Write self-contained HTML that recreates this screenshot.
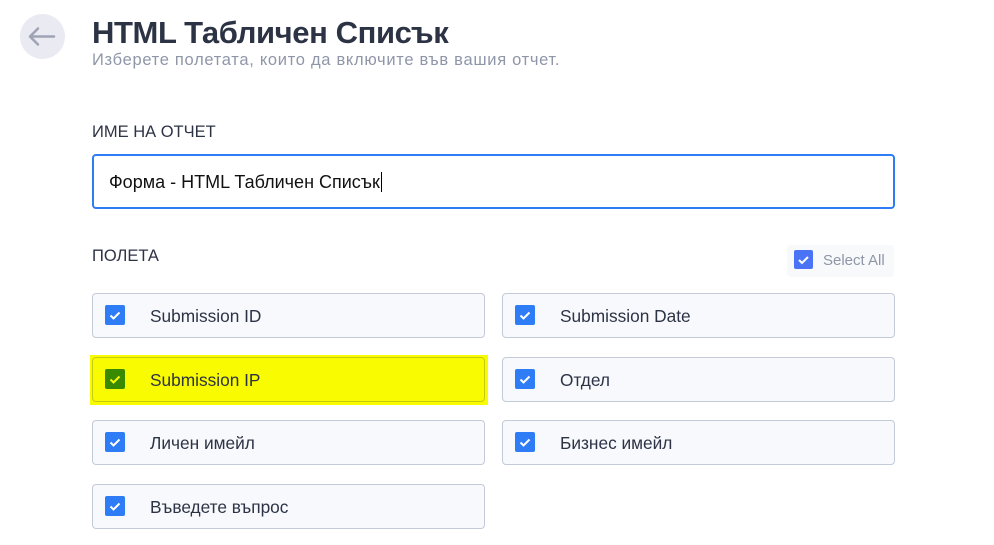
<!DOCTYPE html>
<html><head><meta charset="utf-8"><style>
*{box-sizing:border-box;margin:0;padding:0}
body{width:994px;height:545px;background:#fff;font-family:"Liberation Sans","DejaVu Sans",sans-serif;position:relative;overflow:hidden;color:#2c3345}
.back{position:absolute;left:20px;top:14px;width:45px;height:45px;border-radius:50%;background:#e9eaf2}
h1{position:absolute;left:92px;top:15px;font-size:31px;font-weight:bold;color:#2c3345;letter-spacing:-0.4px}
.sub{position:absolute;left:92px;top:51px;font-size:16.5px;letter-spacing:0.7px;color:#8f96a8}
.lbl{position:absolute;left:92px;font-size:16.5px;color:#2c3345}
.inp{position:absolute;left:92px;top:154px;width:803px;height:55px;border:2px solid #2e7cf6;border-radius:4px;font-size:18px;padding:16px 0 0 15px;color:#111}
.sa{position:absolute;left:787px;top:245px;width:107px;height:32px;background:#f8f9fb;border-radius:4px;font-size:15px;color:#8f96a8;padding:7px 0 0 36px}
.cb{position:absolute;width:20px;height:20px;background:#2e7cf6;border-radius:2px}
.cb svg{position:absolute;left:0;top:0}
.card{position:absolute;width:393px;height:45px;border:1px solid #c3cad8;border-radius:4px;background:#f8f9fc;font-size:17.3px;padding:12px 0 0 57px}
.card .cb{left:12px;top:11px}
.hl{position:absolute;left:90px;top:355px;width:398px;height:50px;background:#f9fb00}
</style></head><body>
<div class="back"><svg width="45" height="45" viewBox="0 0 45 45"><path d="M10 22.5H34M10 22.5l8-8M10 22.5l8 8" stroke="#a0a3b4" stroke-width="2.5" fill="none" stroke-linecap="round" stroke-linejoin="round"/></svg></div>
<h1>HTML Табличен Списък</h1>
<div class="sub">Изберете полетата, които да включите във вашия отчет.</div>
<div class="lbl" style="top:123px">ИМЕ НА ОТЧЕТ</div>
<div class="inp">Форма - HTML Табличен Списък<span style="border-left:1px solid #000;margin-left:1px"></span></div>
<div class="lbl" style="top:247px">ПОЛЕТА</div>
<div class="sa"><div class="cb" style="left:7px;top:5px;width:19px;height:19px;background:#4a74f5"><svg width="19" height="19"><path d="M5 10l3 3 6-6" stroke="#fff" stroke-width="2" fill="none"/></svg></div>Select All</div>

<div class="card" style="left:92px;top:293px"><div class="cb"><svg width="20" height="20"><path d="M5.5 10.5l3 3 6-6" stroke="#fff" stroke-width="2" fill="none"/></svg></div>Submission ID</div>
<div class="card" style="left:502px;top:293px"><div class="cb"><svg width="20" height="20"><path d="M5.5 10.5l3 3 6-6" stroke="#fff" stroke-width="2" fill="none"/></svg></div>Submission Date</div>
<div class="hl"></div>
<div class="card" style="left:92px;top:357px;background:#f9fb00;border-color:#c8ca10"><div class="cb" style="background:#3a8a00"><svg width="20" height="20"><path d="M5.5 10.5l3 3 6-6" stroke="#f9fb00" stroke-width="2" fill="none"/></svg></div>Submission IP</div>
<div class="card" style="left:502px;top:357px"><div class="cb"><svg width="20" height="20"><path d="M5.5 10.5l3 3 6-6" stroke="#fff" stroke-width="2" fill="none"/></svg></div>Отдел</div>
<div class="card" style="left:92px;top:420px"><div class="cb"><svg width="20" height="20"><path d="M5.5 10.5l3 3 6-6" stroke="#fff" stroke-width="2" fill="none"/></svg></div>Личен имейл</div>
<div class="card" style="left:502px;top:420px"><div class="cb"><svg width="20" height="20"><path d="M5.5 10.5l3 3 6-6" stroke="#fff" stroke-width="2" fill="none"/></svg></div>Бизнес имейл</div>
<div class="card" style="left:92px;top:484px"><div class="cb"><svg width="20" height="20"><path d="M5.5 10.5l3 3 6-6" stroke="#fff" stroke-width="2" fill="none"/></svg></div>Въведете въпрос</div>
</body></html>
